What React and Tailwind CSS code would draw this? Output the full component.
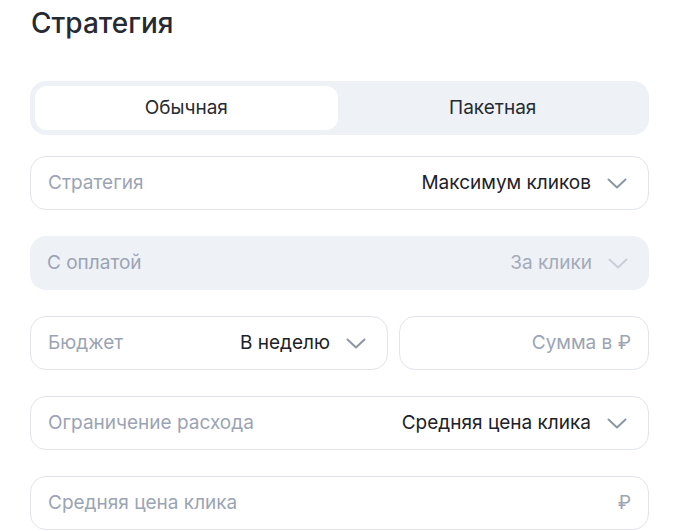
import { useState } from 'react';

function Chevron({ disabled }) {
  return (
    <svg width="20" height="11" viewBox="0 0 20 11" fill="none" className="shrink-0">
      <path
        d="M1.5 1.5L10 9.5L18.5 1.5"
        stroke={disabled ? '#c9ced8' : '#8d96a5'}
        strokeWidth="2"
        strokeLinecap="round"
        strokeLinejoin="round"
      />
    </svg>
  );
}

function SelectField({ label, value, disabled, className = '' }) {
  return (
    <div
      className={`h-[54px] rounded-[16px] flex items-center pl-[17px] pr-[21px] ${
        disabled ? 'bg-[#eef1f6]' : 'border border-[#e1e4ec] bg-white'
      } ${className}`}
    >
      <span className="text-[#9ba4b4]">{label}</span>
      <span className={`ml-auto mr-[16px] ${disabled ? 'text-[#a3abb9]' : 'text-[#1d2128]'}`}>{value}</span>
      <Chevron disabled={disabled} />
    </div>
  );
}

export default function App() {
  const [tab, setTab] = useState('regular');

  return (
    <div className="w-[682px] h-[531px] bg-white overflow-hidden pl-[30px] pr-[33px] pt-[4px] text-[19px] font-['Inter','Noto_Sans',sans-serif]">
      <h1 className="text-[28px] font-medium text-[#262a32] leading-[38px] pl-[1px]">Стратегия</h1>

      {/* Tabs */}
      <div className="mt-[39px] h-[54px] rounded-[16px] bg-[#eef1f6] p-[5px] grid grid-cols-2 gap-[4px]">
        <button
          onClick={() => setTab('regular')}
          className={`rounded-[12px] text-[#262a32] ${tab === 'regular' ? 'bg-white' : ''}`}
        >
          Обычная
        </button>
        <button
          onClick={() => setTab('batch')}
          className={`rounded-[12px] text-[#262a32] ${tab === 'batch' ? 'bg-white' : ''}`}
        >
          Пакетная
        </button>
      </div>

      <div className="mt-[21px] flex flex-col gap-[26px]">
        <SelectField label="Стратегия" value="Максимум кликов" />
        <SelectField label="С оплатой" value="За клики" disabled />

        <div className="flex gap-[11px]">
          <SelectField label="Бюджет" value="В неделю" className="w-[358px]" />
          <div className="flex-1 h-[54px] rounded-[16px] border border-[#e1e4ec] flex items-center justify-end pr-[17px] text-[#9ba4b4]">
            Сумма в ₽
          </div>
        </div>

        <SelectField label="Ограничение расхода" value="Средняя цена клика" />

        <div className="h-[54px] rounded-[16px] border border-[#e1e4ec] flex items-center pl-[17px] pr-[17px] text-[#9ba4b4]">
          <span>Средняя цена клика</span>
          <span className="ml-auto">₽</span>
        </div>
      </div>
    </div>
  );
}
